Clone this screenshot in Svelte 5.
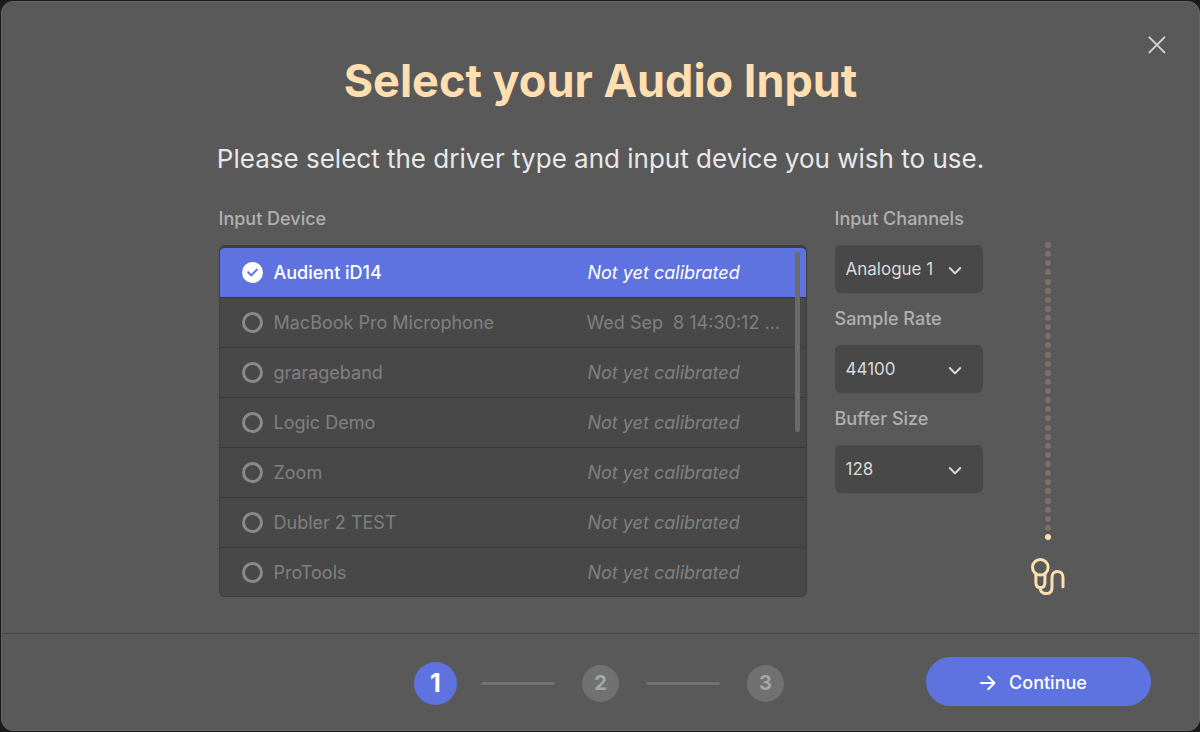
<script>
  const devices = [
    { name: 'Audient iD14', calibrated: null },
    { name: 'MacBook Pro Microphone', calibrated: 'Wed Sep  8 14:30:12 ...' },
    { name: 'grarageband', calibrated: null },
    { name: 'Logic Demo', calibrated: null },
    { name: 'Zoom', calibrated: null },
    { name: 'Dubler 2 TEST', calibrated: null },
    { name: 'ProTools', calibrated: null }
  ];
  const settings = [
    { id: 'channels', label: 'Input Channels', options: ['Analogue 1', 'Analogue 2'] },
    { id: 'rate', label: 'Sample Rate', options: ['44100', '48000'] },
    { id: 'buffer', label: 'Buffer Size', options: ['128', '256', '512'] }
  ];
  const dots = Array.from({ length: 33 }, (_, i) => i);
  let selected = $state('Audient iD14');
</script>

<main class="dialog">
  <header>
    <button class="close" aria-label="Close">
      <svg width="20" height="20" viewBox="0 0 20 20"><path d="M2.4 2.4 17.4 17.4M17.4 2.4 2.4 17.4" /></svg>
    </button>
    <h1>Select your Audio Input</h1>
    <p>Please select the driver type and input device you wish to use.</p>
  </header>

  <div class="content">
    <fieldset class="devices">
      <legend>Input Device</legend>
      <div class="list">
        {#each devices as d}
          <label class="row" class:active={selected === d.name}>
            <input type="radio" name="device" value={d.name} bind:group={selected} />
            <span class="mark">
              {#if selected === d.name}
                <svg width="21" height="21" viewBox="0 0 21 21"><path d="M6.2 10.3 9.3 13.4 14.9 7.6" /></svg>
              {/if}
            </span>
            <span class="name">{d.name}</span>
            <span class="status" class:never={!d.calibrated}>{d.calibrated ?? 'Not yet calibrated'}</span>
          </label>
        {/each}
        <span class="thumb"></span>
      </div>
    </fieldset>

    <div class="settings">
      {#each settings as s}
        <div class="field">
          <label for={s.id}>{s.label}</label>
          <div class="select">
            <select id={s.id}>
              {#each s.options as o}<option>{o}</option>{/each}
            </select>
            <svg width="14" height="10" viewBox="0 0 14 10"><path d="M1.8 2 7 7.4 12.2 2" /></svg>
          </div>
        </div>
      {/each}
    </div>

    <div class="meter">
      <div class="dots">
        {#each dots as i}<span class:lit={i === dots.length - 1}></span>{/each}
      </div>
      <svg class="mic" width="36" height="38" viewBox="0 0 36 38">
        <circle cx="10.3" cy="9.3" r="7.8" />
        <path d="M5.9 16V24.4Q5.9 29.6 10.4 29.6Q14.9 29.6 14.9 24.4V16M10 29.6C10.4 33.4 12.6 35.6 16 35.6C19.8 35.6 22 33.2 22 29.4V19.2C22 15.6 24.2 13.4 27.4 13.4C30.8 13.4 33 15.6 33 19.2V28.8" />
      </svg>
    </div>
  </div>

  <footer>
    <ol class="steps">
      <li><span class="current" aria-current="step">1</span></li>
      <li><span>2</span></li>
      <li><span>3</span></li>
    </ol>
    <button class="continue">
      <svg width="16" height="16" viewBox="0 0 16 16"><path d="M1 8H14.5M8.2 1.8 14.5 8 8.2 14.2" /></svg>
      Continue
    </button>
  </footer>
</main>

<style>
  :global(body) {
    background: #1b1b1b;
  }
  .dialog {
    box-sizing: border-box;
    min-height: calc(100vh - 3px);
    margin: 1px 0 2px 1px;
    display: flex;
    flex-direction: column;
    border: 1px solid #646464;
    border-radius: 12px;
    background: #595959;
    color: #b0b0b0;
    font-family: Inter, sans-serif;
    font-size: 18px;
    line-height: 24px;
  }
  svg {
    fill: none;
    stroke: currentColor;
    stroke-width: 2;
    stroke-linecap: round;
    stroke-linejoin: round;
  }
  button,
  select {
    font: inherit;
    border: 0;
    cursor: pointer;
  }
  header {
    position: relative;
    padding: 51px 24px 0;
    text-align: center;
  }
  h1 {
    margin: 0;
    color: #ffdfb0;
    font-size: 45px;
    font-weight: 700;
    line-height: 56px;
  }
  header p {
    margin: 34px 0 0;
    color: #e8e8e8;
    font-size: 26px;
    line-height: 32px;
  }
  .close {
    position: absolute;
    top: 32px;
    right: 31px;
    display: flex;
    padding: 1px;
    background: none;
    color: #cfd2d2;
  }
  .content {
    flex: 1;
    display: grid;
    grid-template-columns: minmax(0, 1fr) minmax(0, 588px) 148px minmax(0, 1fr);
    column-gap: 28px;
    align-items: start;
    margin-top: 32px;
    padding-bottom: 36px;
  }
  .devices {
    grid-column: 2;
    margin: 0;
    padding: 0;
    border: 0;
    min-width: 0;
  }
  legend {
    padding: 0;
    margin-bottom: 14px;
  }
  legend,
  .field label {
    font-weight: 500;
  }
  .list {
    box-sizing: border-box;
    position: relative;
    max-height: 352px;
    overflow: hidden;
    border: 1px solid #3e3e3e;
    border-top-width: 3px;
    border-radius: 6px;
    background: #484848;
  }
  .row {
    display: grid;
    grid-template-columns: 21px minmax(0, 1fr) 197px;
    column-gap: 11px;
    align-items: center;
    height: 49px;
    padding: 0 22px;
    border-bottom: 1px solid #393939;
    color: #808080;
    cursor: pointer;
  }
  .row.active {
    background: #5e73df;
    color: #fff;
  }
  .row input {
    position: absolute;
    opacity: 0;
    margin: 0;
  }
  .mark {
    box-sizing: border-box;
    width: 21px;
    height: 21px;
    border: 3px solid #8a8a8a;
    border-radius: 50%;
  }
  .active .mark {
    border: 0;
    background: #fff;
    color: #5e73df;
  }
  .mark svg {
    display: block;
  }
  .active .name {
    font-weight: 500;
  }
  .status {
    white-space: pre;
  }
  .never {
    padding-left: 1px;
    font-style: italic;
  }
  .thumb {
    position: absolute;
    top: 4px;
    right: 6px;
    width: 5px;
    height: 180px;
    border-radius: 3px;
    background: #6b6b6b;
  }
  .settings {
    display: grid;
    gap: 14px;
  }
  .field {
    display: grid;
    gap: 14px;
  }
  .select {
    position: relative;
    color: #d8dada;
    font-size: 17px;
  }
  select {
    appearance: none;
    display: block;
    width: 100%;
    height: 48px;
    padding: 0 40px 0 11px;
    border-radius: 6px;
    background: #484848;
    color: inherit;
  }
  .select svg {
    position: absolute;
    top: 21px;
    right: 21px;
    pointer-events: none;
  }
  .meter {
    display: flex;
    flex-direction: column;
    gap: 18px;
    padding: 35px 0 0 19px;
  }
  .dots {
    display: flex;
    flex-direction: column;
    justify-content: space-between;
    align-items: center;
    width: 36px;
    height: 298px;
  }
  .dots span {
    width: 6px;
    height: 6px;
    border-radius: 50%;
    background: #7a736a;
  }
  .dots .lit {
    background: #ffdfb0;
  }
  .mic {
    color: #ffdfb0;
    stroke-width: 3;
  }
  footer {
    display: grid;
    grid-template-columns: 1fr auto 1fr;
    align-items: center;
    padding: 23px 48px 24px;
    border-top: 1px solid #484848;
  }
  .steps {
    grid-column: 2;
    display: flex;
    align-items: center;
    gap: 27px;
    margin: 0;
    padding: 3px 0 0;
    list-style: none;
  }
  .steps li {
    display: flex;
    align-items: center;
    gap: 27px;
  }
  .steps li:not(:last-child)::after {
    content: '';
    width: 74px;
    height: 3px;
    border-radius: 2px;
    background: #717171;
  }
  .steps span {
    display: grid;
    place-items: center;
    width: 37px;
    height: 37px;
    border-radius: 50%;
    background: #717171;
    color: #a4a8a6;
    font-size: 20px;
    font-weight: 700;
  }
  .steps .current {
    width: 43px;
    height: 43px;
    margin: 0 -3px;
    background: #5e73df;
    color: #fff;
    font-size: 25px;
  }
  .continue {
    justify-self: end;
    display: flex;
    align-items: center;
    justify-content: center;
    gap: 13px;
    width: 225px;
    height: 49px;
    padding: 2px 10px 0 0;
    border-radius: 25px;
    background: #5e73df;
    color: #fff;
    font-size: 18px;
    font-weight: 500;
  }
</style>
